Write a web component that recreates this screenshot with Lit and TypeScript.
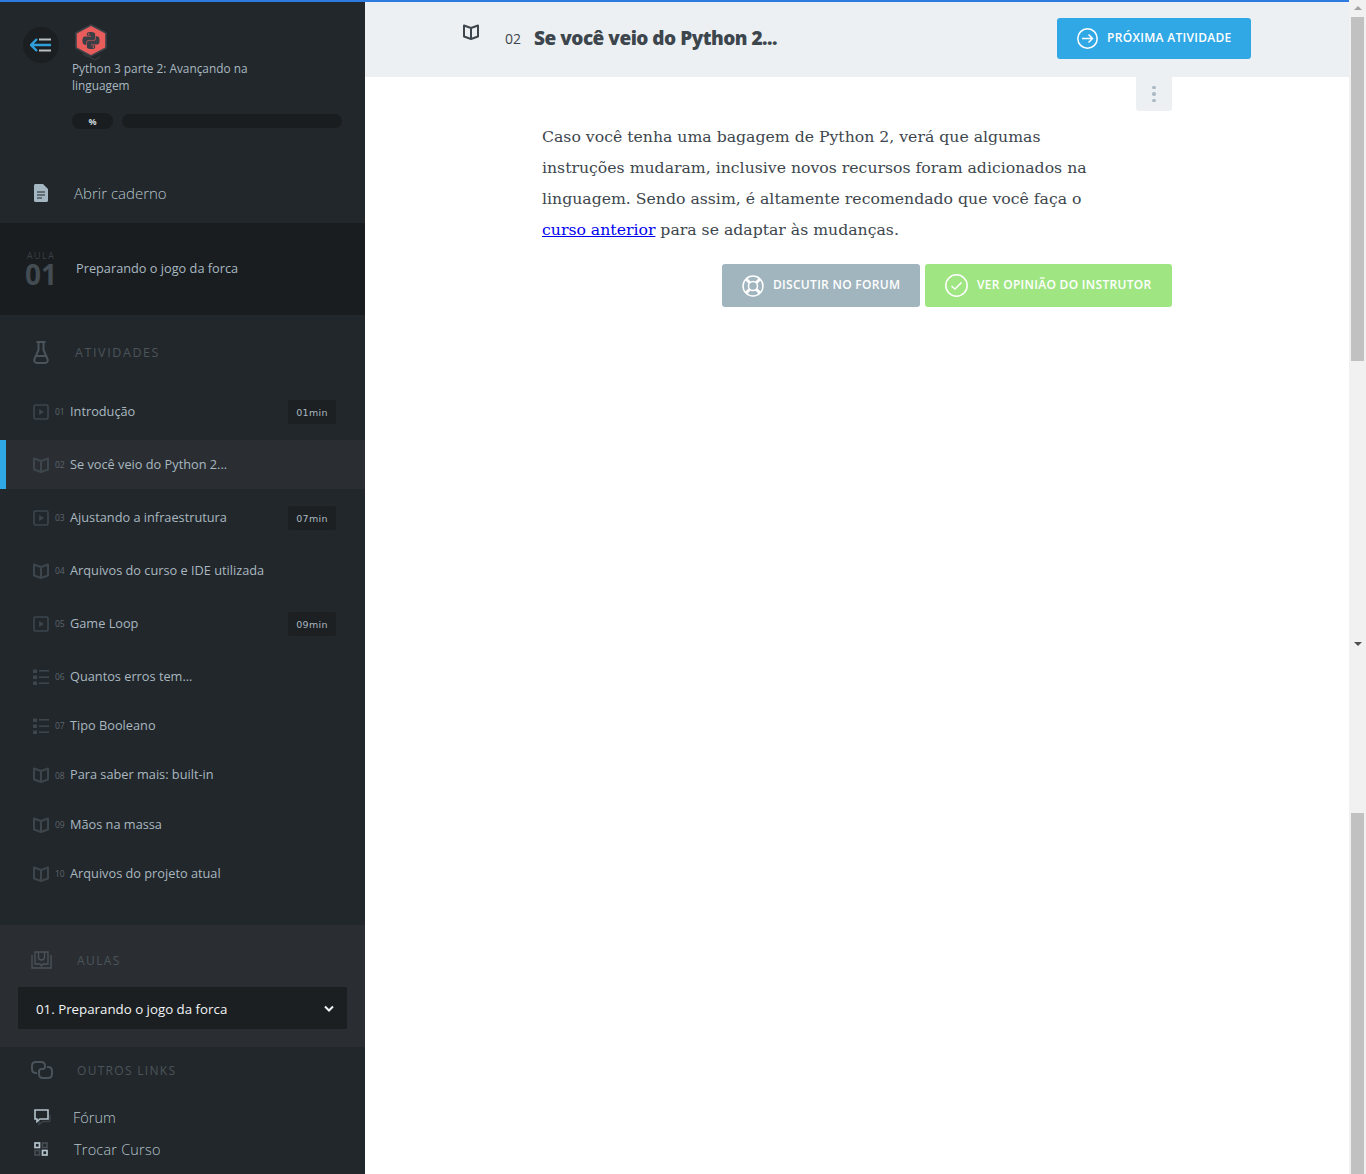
import { LitElement, html, css, svg } from 'lit';
import { customElement } from 'lit/decorators.js';

type Activity = { n: string; title: string; kind: 'play' | 'book' | 'list'; min?: string; active?: boolean; tall?: boolean };

const activities: Activity[] = [
  { n: '01', title: 'Introdução', kind: 'play', min: '01', tall: true },
  { n: '02', title: 'Se você veio do Python 2...', kind: 'book', active: true, tall: true },
  { n: '03', title: 'Ajustando a infraestrutura', kind: 'play', min: '07', tall: true },
  { n: '04', title: 'Arquivos do curso e IDE utilizada', kind: 'book', tall: true },
  { n: '05', title: 'Game Loop', kind: 'play', min: '09', tall: true },
  { n: '06', title: 'Quantos erros tem...', kind: 'list' },
  { n: '07', title: 'Tipo Booleano', kind: 'list' },
  { n: '08', title: 'Para saber mais: built-in', kind: 'book' },
  { n: '09', title: 'Mãos na massa', kind: 'book' },
  { n: '10', title: 'Arquivos do projeto atual', kind: 'book' },
];

const bookIcon = svg`<path d="M1 1.5 L8 4 L15 1.5 V12.5 L8 15 L1 12.5 Z M8 4 V15" fill="none" stroke="currentColor" stroke-width="2" stroke-linejoin="round"/>`;
const playIcon = svg`<rect x="1" y="1" width="14" height="14" rx="1.5" fill="none" stroke="currentColor" stroke-width="1.6"/><path d="M6.2 5 L11 8 L6.2 11 Z" fill="currentColor"/>`;
const listIcon = svg`<g fill="currentColor"><rect x="0" y="0.5" width="4" height="3.5"/><rect x="0" y="6.5" width="4" height="3.5"/><rect x="0" y="12.5" width="4" height="3.5"/><rect x="6" y="1" width="10" height="1.6"/><rect x="6" y="7.4" width="10" height="1.6"/><rect x="6" y="13.4" width="10" height="1.6"/></g>`;

const pythonPath = 'M14.25.18l.9.2.73.26.59.3.45.32.34.34.25.34.16.33.1.3.04.26.02.2-.01.13V8.5l-.05.63-.13.55-.21.46-.26.38-.3.31-.33.25-.35.19-.35.14-.33.1-.3.07-.26.04-.21.02H8.77l-.69.05-.59.14-.5.22-.41.27-.33.32-.27.35-.2.36-.15.37-.1.35-.07.32-.04.27-.02.21v3.06H3.17l-.21-.03-.28-.07-.32-.12-.35-.18-.36-.26-.36-.36-.35-.46-.32-.59-.28-.73-.21-.88-.14-1.05-.05-1.23.06-1.22.16-1.04.24-.87.32-.71.36-.57.4-.44.42-.33.42-.24.4-.16.36-.1.32-.05.24-.01h.16l.06.01h8.16v-.83H6.18l-.01-2.75-.02-.37.05-.34.11-.31.17-.28.25-.26.31-.23.38-.2.44-.18.51-.15.58-.12.64-.1.71-.06.77-.04.84-.02 1.27.05zm-6.3 1.98l-.23.33-.08.41.08.41.23.34.33.22.41.09.41-.09.33-.22.23-.34.08-.41-.08-.41-.23-.33-.33-.22-.41-.09-.41.09zm13.09 3.95l.28.06.32.12.35.18.36.27.36.35.35.47.32.59.28.73.21.88.14 1.04.05 1.23-.06 1.23-.16 1.04-.24.86-.32.71-.36.57-.4.45-.42.33-.42.24-.4.16-.36.09-.32.05-.24.02-.16-.01h-8.22v.82h5.84l.01 2.76.02.36-.05.34-.11.31-.17.29-.25.25-.31.24-.38.2-.44.17-.51.15-.58.13-.64.09-.71.07-.77.04-.84.01-1.27-.04-1.07-.14-.9-.2-.73-.25-.59-.3-.45-.33-.34-.34-.25-.34-.16-.33-.1-.3-.04-.25-.02-.2.01-.13v-5.34l.05-.64.13-.54.21-.46.26-.38.3-.32.33-.24.35-.2.35-.14.33-.1.3-.06.26-.04.21-.02.13-.01h5.84l.69-.05.59-.14.5-.21.41-.28.33-.32.27-.35.2-.36.15-.36.1-.35.07-.32.04-.28.02-.21V6.07h2.09l.14.01zm-6.47 14.25l-.23.33-.08.41.08.41.23.33.33.23.41.08.41-.08.33-.23.23-.33.08-.41-.08-.41-.23-.33-.33-.23-.41-.08-.41.08z';

@customElement('app-root')
export class AppRoot extends LitElement {
  static styles = css`
    :host {
      display: flex;
      height: 1174px;
      overflow: hidden;
      font-family: 'Open Sans', sans-serif;
    }
    .page { flex: 1; display: flex; flex-direction: column; min-width: 0; }
    .topline { height: 2px; background: #2d7be0; flex: none; }
    .cols { flex: 1; display: flex; min-height: 0; }

    .sidebar {
      width: 365px;
      flex: none;
      background: #22272b;
      display: flex;
      flex-direction: column;
      color: #a9b8c0;
      font-weight: 300;
    }
    .head { height: 221px; flex: none; display: flex; flex-direction: column; }
    .head-top { display: flex; padding: 22px 0 0 23px; }
    .toggle {
      width: 36px; height: 36px; margin-top: 3px; border-radius: 50%;
      background: #1b1f22; display: flex; align-items: center; justify-content: center; flex: none;
    }
    .course { margin-left: 13px; width: 200px; }
    .logo { display: block; margin-left: 2px; }
    .course-name { font-size: 11.850px; line-height: 17px; font-weight: 400; white-space: nowrap; margin-top: -1px; }
    .progress { display: flex; align-items: center; padding: 19px 0 0 72px; }
    .pct {
      width: 41px; height: 16px; border-radius: 8px; background: #191d20; color: #c7d2d8;
      font-size: 9px; font-weight: 700; display: flex; align-items: center; justify-content: center;
    }
    .bar { width: 220px; height: 14px; border-radius: 7px; background: #191d20; margin-left: 9px; }
    .notebook { display: flex; align-items: center; padding: 54px 0 0 34px; font-size: 15px; color: #b7c5cc; }
    .notebook span { margin-left: 26px; }

    .lesson { height: 92px; flex: none; background: #191d20; display: flex; padding-left: 25px; box-sizing: border-box; }
    .lesson-no { width: 51px; flex: none; padding-top: 28px; }
    .lesson-no small { display: block; font-size: 9px; line-height: 10px; letter-spacing: 1.6px; color: #4b5459; padding-left: 2px; }
    .lesson-no b { display: block; margin-top: 3px; font-size: 28px; line-height: 20px; font-weight: 700; color: #434c52; }
    .lesson-name { font-size: 12.750px; font-weight: 400; line-height: 18px; padding-top: 36px; }

    .activities { height: 610px; flex: none; padding-top: 22px; box-sizing: border-box; }
    .section-title {
      display: flex; align-items: center; font-size: 12.500px; font-weight: 400;
      letter-spacing: 1.6px; color: #4b545a; text-transform: uppercase;
    }
    .activities .section-title { height: 30px; padding-left: 33px; margin-bottom: 20px; }
    .activities .section-title span { margin-left: 26px; }
    .row { height: 49.300px; display: flex; align-items: center; padding: 0 29px 0 33px; position: relative; }
    .row.tall { height: 49px; margin-bottom: 4px; }
    .row.active { background: #2a2e32; }
    .row.active::before { content: ''; position: absolute; left: 0; top: 0; bottom: 0; width: 6px; background: #31a8e6; }
    .row svg { color: #3d464d; flex: none; }
    .num { width: 15px; margin-left: 6px; font-size: 8.500px; color: #5d666c; flex: none; font-weight: 400; }
    .title { flex: 1; font-size: 12.750px; font-weight: 400; white-space: nowrap; margin-top: -2px; }
    .badge {
      width: 48px; height: 24px; background: #1c2023; border-radius: 2px; color: #a9b8c0;
      font-size: 9.500px; letter-spacing: 0.300px; font-family: 'DejaVu Sans', sans-serif;
      display: flex; align-items: center; justify-content: center; font-weight: 400; margin-top: 1px;
    }

    .lessons { height: 122px; flex: none; background: #2a2e32; box-sizing: border-box; padding: 26px 18px 0; }
    .lessons .section-title { height: 18px; padding-left: 13px; font-size: 12px; letter-spacing: 1.4px; }
    .lessons .section-title span { margin-left: 25px; }
    .select {
      height: 42px; margin-top: 18px; background: #1b1f22; color: #f2f4f5; display: flex; align-items: center;
      justify-content: space-between; padding: 0 13px 0 18px; font-size: 13.300px; font-weight: 400;
    }
    .select span { margin-top: 2px; }

    .others { flex: 1; padding-top: 14px; }
    .others .section-title { height: 18px; padding-left: 31px; font-size: 12px; letter-spacing: 1.3px; }
    .others .section-title span { margin-left: 24px; }
    .link { display: flex; align-items: center; padding-left: 34px; font-size: 14.500px; height: 32px; color: #b7c5cc; }
    .link span { margin-left: 22px; }
    .link.first { margin-top: 22px; }
    .link.second span { margin-left: 26px; letter-spacing: 0.200px; }

    .main { flex: 1; background: #fff; min-width: 0; }
    .bar-top {
      height: 75px; background: #edf0f2; display: flex; color: #3d464d;
      padding-left: 98px; box-sizing: border-box;
    }
    .bar-top .book { margin-top: 22px; flex: none; }
    .bar-top .no { margin-left: 26px; margin-top: 27px; font-size: 14px; line-height: 20px; font-weight: 400; }
    .bar-top h1 { margin: 20px 0 0 13px; font-size: 19px; letter-spacing: -0.500px; line-height: 32px; font-weight: 800; white-space: nowrap; width: 523px; }
    .btn {
      display: flex; align-items: center; color: #fff; font-size: 12px; font-weight: 600; letter-spacing: 0.300px;
      border-radius: 3px; box-sizing: border-box; white-space: nowrap;
    }
    .btn span { margin-top: -2px; }
    .btn svg { margin-right: 9px; flex: none; }
    .next { width: 194px; height: 41px; margin-top: 16px; background: #31a8e6; padding-left: 20px; }
    .content { width: 630px; margin-left: 177px; }
    .kebab-line { display: flex; justify-content: flex-end; }
    .kebab {
      width: 36px; height: 34px; background: #edf0f2; border-radius: 0 0 3px 3px;
      display: flex; flex-direction: column; align-items: center; justify-content: center; gap: 3px;
    }
    .kebab i { width: 3.500px; height: 3.500px; border-radius: 50%; background: #a9bac4; }
    p {
      margin: 10px 0 0; font-family: 'DejaVu Serif', serif; white-space: nowrap;
      font-size: 15.700px; line-height: 31px; color: #3d464d;
    }
    a { color: #0000ee; text-decoration: underline; }
    .actions { display: flex; justify-content: flex-end; gap: 5px; margin-top: 19px; }
    .actions .btn { height: 43px; padding-left: 20px; }
    .forum { width: 198px; background: #a1b5be; }
    .opinion { width: 247px; background: #9fe683; }

    .scrollbars { width: 17px; flex: none; display: flex; flex-direction: column; background: #f1f1f1; }
    .sb { display: flex; flex-direction: column; align-items: center; }
    .sb.one { height: 651px; }
    .sb.two { flex: 1; justify-content: flex-end; }
    .arrow-up { width: 0; height: 0; border: 4px solid transparent; border-bottom: 4px solid #a3a3a3; border-top: 0; margin-top: 6px; }
    .arrow-down { width: 0; height: 0; border: 4px solid transparent; border-top: 4px solid #505050; border-bottom: 0; margin-top: auto; margin-bottom: 5px; }
    .thumb { width: 13px; background: #c1c1c1; }
    .sb.one .thumb { height: 344px; margin-top: 7px; }
    .sb.two .thumb { height: 361px; }
  `;

  icon(kind: Activity['kind']) {
    const body = kind === 'book' ? bookIcon : kind === 'play' ? playIcon : listIcon;
    return html`<svg width="16" height="16" viewBox="0 0 16 16">${body}</svg>`;
  }

  render() {
    return html`
      <div class="page">
        <div class="topline"></div>
        <div class="cols">
          <aside class="sidebar">
            <div class="head">
              <div class="head-top">
                <div class="toggle">
                  <svg width="22" height="14" viewBox="0 0 22 14">
                    <path d="M7 1 L1 7 L7 13 M1 7 H21" fill="none" stroke="#2f9fdc" stroke-width="2.400"/>
                    <rect x="9" y="0.500" width="12" height="2" fill="#b9c0c4"/>
                    <rect x="9" y="11.500" width="12" height="2" fill="#b9c0c4"/>
                  </svg>
                </div>
                <div class="course">
                  <svg class="logo" width="34" height="37" viewBox="0 0 34 37">
                    <path d="M17 1 L32 9 V24 L17 32 L2 24 V9 Z" fill="#e85c5c" stroke="#3b4146" stroke-width="1.600" stroke-linejoin="round"/>
                    <path d="M9 30 L21 36 L26 33" fill="none" stroke="#33393d" stroke-width="1.500"/>
                    <path transform="translate(8.500 8) scale(0.710)" d="${pythonPath}" fill="#3a3f45"/>
                  </svg>
                  <div class="course-name">Python 3 parte 2: Avançando na<br />linguagem</div>
                </div>
              </div>
              <div class="progress"><div class="pct">%</div><div class="bar"></div></div>
              <div class="notebook">
                <svg width="14" height="18" viewBox="0 0 14 18">
                  <path d="M1.500 0 H9 L14 5 V16.500 C14 17.300 13.300 18 12.500 18 H1.500 C0.700 18 0 17.300 0 16.500 V1.500 C0 0.700 0.700 0 1.500 0 Z" fill="#a3b6c1"/>
                  <path d="M3 8 H11 M3 11 H11 M3 14 H8" stroke="#22272b" stroke-width="1.200"/>
                </svg>
                <span>Abrir caderno</span>
              </div>
            </div>

            <div class="lesson">
              <div class="lesson-no"><small>AULA</small><b>01</b></div>
              <div class="lesson-name">Preparando o jogo da forca</div>
            </div>

            <div class="activities">
              <div class="section-title">
                <svg width="16" height="23" viewBox="0 0 16 23" fill="none" stroke="#4b545a" stroke-width="2">
                  <path d="M3.500 1 H12.500 M5.500 1 V9 L1.500 18 C0.700 20 1.800 22 4 22 H12 C14.200 22 15.300 20 14.500 18 L10.500 9 V1 M3.500 15 H12.500"/>
                </svg>
                <span>Atividades</span>
              </div>
              ${activities.map(a => html`
                <div class="row ${a.tall ? 'tall' : ''} ${a.active ? 'active' : ''}">
                  ${this.icon(a.kind)}
                  <span class="num">${a.n}</span>
                  <span class="title">${a.title}</span>
                  ${a.min ? html`<span class="badge">${a.min}min</span>` : ''}
                </div>
              `)}
            </div>

            <div class="lessons">
              <div class="section-title">
                <svg width="21" height="18" viewBox="0 0 21 18" fill="none" stroke="#4a5359" stroke-width="1.300">
                  <path d="M1 4 V17 H20 V4"/>
                  <path d="M4 1 H17 V13 H12 L10.500 15 L9 13 H4 Z"/>
                  <path d="M7.500 1 V6 C7.500 8 9 9 10.500 9 C12 9 13.500 8 13.500 6 V1"/>
                </svg>
                <span>Aulas</span>
              </div>
              <div class="select">
                <span>01. Preparando o jogo da forca</span>
                <svg width="10" height="7" viewBox="0 0 10 7"><path d="M1 1.500 L5 5.500 L9 1.500" fill="none" stroke="#f2f4f5" stroke-width="2"/></svg>
              </div>
            </div>

            <div class="others">
              <div class="section-title">
                <svg width="22" height="18" viewBox="0 0 22 18" fill="none" stroke="#4a5359" stroke-width="2">
                  <path d="M6 12 H5 C2.500 12 1 10.500 1 8 V5 C1 2.500 2.500 1 5 1 H10 C12.500 1 14 2.500 14 5 V6 C14 7.500 13 8 11.500 8 H10.500 C9 8 8 9 8 10.500 V13 C8 15.500 9.500 17 12 17 H17 C19.500 17 21 15.500 21 13 V10 C21 7.500 19.500 6 17 6 H16"/>
                </svg>
                <span>Outros links</span>
              </div>
              <div class="link first">
                <svg width="17" height="17" viewBox="0 0 17 17" fill="none">
                  <path d="M5 12 V15.500 L9 12.500 H15 C15.800 12.500 16 12 16 11.500 V6" stroke="#3a4248" stroke-width="1.500"/>
                  <path d="M1 1 H14 V10 H6 L3 12.500 V10 H1 Z" stroke="#b4c4cc" stroke-width="1.600"/>
                </svg>
                <span>Fórum</span>
              </div>
              <div class="link second">
                <svg width="14" height="14" viewBox="0 0 14 14" fill="none" stroke-width="1.700">
                  <rect x="1" y="1" width="4.500" height="4.500" stroke="#b4c4cc"/>
                  <rect x="8.500" y="1" width="4.500" height="4.500" stroke="#454d53"/>
                  <rect x="1" y="8.500" width="4.500" height="4.500" stroke="#454d53"/>
                  <rect x="8.500" y="8.500" width="4.500" height="4.500" stroke="#b4c4cc"/>
                </svg>
                <span>Trocar Curso</span>
              </div>
            </div>
          </aside>

          <main class="main">
            <div class="bar-top">
              <svg class="book" width="16" height="16" viewBox="0 0 16 16">${bookIcon}</svg>
              <span class="no">02</span>
              <h1>Se você veio do Python 2...</h1>
              <div class="btn next">
                <svg width="21" height="21" viewBox="0 0 21 21" fill="none" stroke="#fff" stroke-width="1.500">
                  <circle cx="10.500" cy="10.500" r="9.700"/>
                  <path d="M5 10.500 H15.500 M11.500 6.500 L15.500 10.500 L11.500 14.500"/>
                </svg>
                <span>PRÓXIMA ATIVIDADE</span>
              </div>
            </div>
            <div class="content">
              <div class="kebab-line"><div class="kebab"><i></i><i></i><i></i></div></div>
              <p>
                Caso você tenha uma bagagem de Python 2, verá que algumas<br />
                instruções mudaram, inclusive novos recursos foram adicionados na<br />
                linguagem. Sendo assim, é altamente recomendado que você faça o<br />
                <a href="#">curso anterior</a> para se adaptar às mudanças.
              </p>
              <div class="actions">
                <div class="btn forum">
                  <svg width="22" height="22" viewBox="0 0 22 22" fill="none" stroke="#fff" stroke-width="1.500">
                    <circle cx="11" cy="11" r="10"/>
                    <circle cx="11" cy="11" r="4.500"/>
                    <path d="M4 4 L7.800 7.800 M18 4 L14.200 7.800 M4 18 L7.800 14.200 M18 18 L14.200 14.200" stroke-width="3"/>
                  </svg>
                  <span>DISCUTIR NO FORUM</span>
                </div>
                <div class="btn opinion">
                  <svg width="23" height="23" viewBox="0 0 23 23" fill="none" stroke="#fff" stroke-width="1.500">
                    <circle cx="11.500" cy="11.500" r="10.700"/>
                    <path d="M6.500 12 L10 15 L16.500 8.500"/>
                  </svg>
                  <span>VER OPINIÃO DO INSTRUTOR</span>
                </div>
              </div>
            </div>
          </main>
        </div>
      </div>
      <div class="scrollbars">
        <div class="sb one"><div class="arrow-up"></div><div class="thumb"></div><div class="arrow-down"></div></div>
        <div class="sb two"><div class="thumb"></div></div>
      </div>
    `;
  }
}
